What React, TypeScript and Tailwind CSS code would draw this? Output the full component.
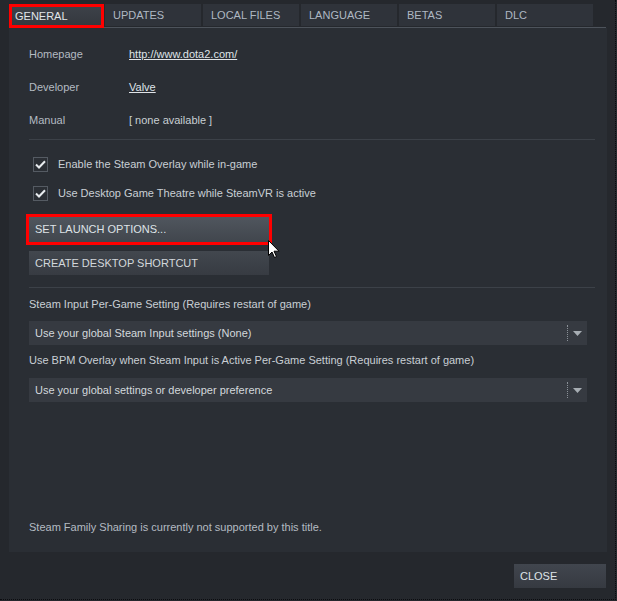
import React from 'react';

// ================================================================
// DATA
// ================================================================

const tabs = ['UPDATES', 'LOCAL FILES', 'LANGUAGE', 'BETAS', 'DLC'];

const infoRows = [
  { label: 'Homepage', value: 'http://www.dota2.com/', link: true },
  { label: 'Developer', value: 'Valve', link: true },
  { label: 'Manual', value: '[ none available ]', link: false },
];

const checks = [
  'Enable the Steam Overlay while in-game',
  'Use Desktop Game Theatre while SteamVR is active',
];

// ================================================================
// PIECES
// ================================================================

function CheckBox() {
  return (
    <span className="flex h-[15px] w-[15px] items-center justify-center border border-[#555b63] bg-[#2b2f35]">
      <svg width="11" height="9" viewBox="0 0 11 9" fill="none">
        <path d="M1 4.5L4 7.5L10 1.2" stroke="#e8ecef" strokeWidth="2" />
      </svg>
    </span>
  );
}

function Dropdown({ text }: { text: string }) {
  return (
    <div className="flex h-[24px] w-[558px] items-center bg-[#363a41] pl-[6px]">
      <span className="flex-1 text-[#d3d8dc]">{text}</span>
      <span className="h-[16px] border-l border-dotted border-[#8a9097]" />
      <svg className="mx-[5px]" width="9" height="5" viewBox="0 0 9 5">
        <path d="M0 0H9L4.5 5Z" fill="#a7adb3" />
      </svg>
    </div>
  );
}

function Cursor() {
  return (
    <svg
      className="absolute left-[268px] top-[240px]"
      width="12"
      height="19"
      viewBox="0 0 12 19"
    >
      <path
        d="M0.5 0.5V15.5L4 12L6.5 17.5L8.5 16.6L6 11.2H11Z"
        fill="#ffffff"
        stroke="#000000"
        strokeWidth="1"
      />
    </svg>
  );
}

// ================================================================
// MAIN
// ================================================================

export default function App() {
  return (
    <div
      className="relative h-[601px] w-[617px] bg-[#25282d] text-[11px] text-[#b4bbc2]"
      style={{ fontFamily: '"Liberation Sans", Arial, sans-serif' }}
    >
      <div className="flex h-[600px] w-[616px] flex-col border-b border-r border-dotted border-[#0b0c10]">
        {/* Tabs */}
        <div className="flex items-end pl-[9px] pt-[4px]">
          <div className="flex h-[24px] w-[95px] items-center bg-gradient-to-b from-[#3e434a] to-[#33373d] pl-[6px] pt-[1px] text-[#e2e6ea] outline outline-[3px] -outline-offset-[3px] outline-[#ff0000]">
            GENERAL
          </div>
          <div className="flex flex-1 flex-col">
            <div className="flex gap-[2px] pl-[1px]">
              {tabs.map((t) => (
                <div
                  key={t}
                  className="flex h-[22px] w-[96px] items-center bg-[#2f333a] pl-[8px] pt-[1px] text-[#aeb8c3]"
                >
                  {t}
                </div>
              ))}
            </div>
            <div className="mt-[1px] h-px w-[502px] bg-[#4d535b]" />
          </div>
        </div>

        {/* Panel */}
        <div className="ml-[9px] flex h-[524px] w-[598px] flex-col bg-[#2a2e34] pl-[20px] pr-[12px]">
          <div className="pt-[10px]">
            {infoRows.map((r) => (
              <div key={r.label} className="flex h-[33px] items-center">
                <span className="w-[100px]">{r.label}</span>
                <span className={r.link ? 'text-[#dfe3e7] underline' : 'text-[#c8ced3]'}>
                  {r.value}
                </span>
              </div>
            ))}
          </div>
          <div className="mt-[2px] h-px bg-[#3c4148]" />

          <div className="mt-[10px]">
            {checks.map((c) => (
              <div key={c} className="flex h-[29px] items-center gap-[10px] pl-[4px] text-[#c9cfd4]">
                <CheckBox />
                <span>{c}</span>
              </div>
            ))}
          </div>

          <div className="mt-[9px] flex h-[25px] w-[240px] items-center bg-gradient-to-b from-[#50565e] to-[#41464d] pl-[6px] text-[#dfe3e7] ring-[3px] ring-[#ff0000]">
            SET LAUNCH OPTIONS...
          </div>
          <div className="mt-[9px] flex h-[24px] w-[240px] items-center bg-gradient-to-b from-[#42474e] to-[#373b42] pl-[6px] text-[#d3d8dc]">
            CREATE DESKTOP SHORTCUT
          </div>

          <div className="mt-[12px] h-px bg-[#3c4148]" />

          <div className="mt-[9px] leading-[14px] text-[#c9cfd4]">
            Steam Input Per-Game Setting (Requires restart of game)
          </div>
          <div className="mt-[10px]">
            <Dropdown text="Use your global Steam Input settings (None)" />
          </div>
          <div className="mt-[8px] leading-[14px] text-[#c9cfd4]">
            Use BPM Overlay when Steam Input is Active Per-Game Setting (Requires restart of game)
          </div>
          <div className="mt-[11px]">
            <Dropdown text="Use your global settings or developer preference" />
          </div>

          <div className="flex-1" />
          <div className="pb-[18px] leading-[14px] text-[#b4bbc2]">
            Steam Family Sharing is currently not supported by this title.
          </div>
        </div>

        {/* Footer */}
        <div className="flex justify-end pr-[9px] pt-[12px]">
          <div className="flex h-[24px] w-[92px] items-center bg-gradient-to-b from-[#41464e] to-[#363a41] pl-[6px] text-[#dfe3e7]">
            CLOSE
          </div>
        </div>
      </div>

      <Cursor />
    </div>
  );
}
